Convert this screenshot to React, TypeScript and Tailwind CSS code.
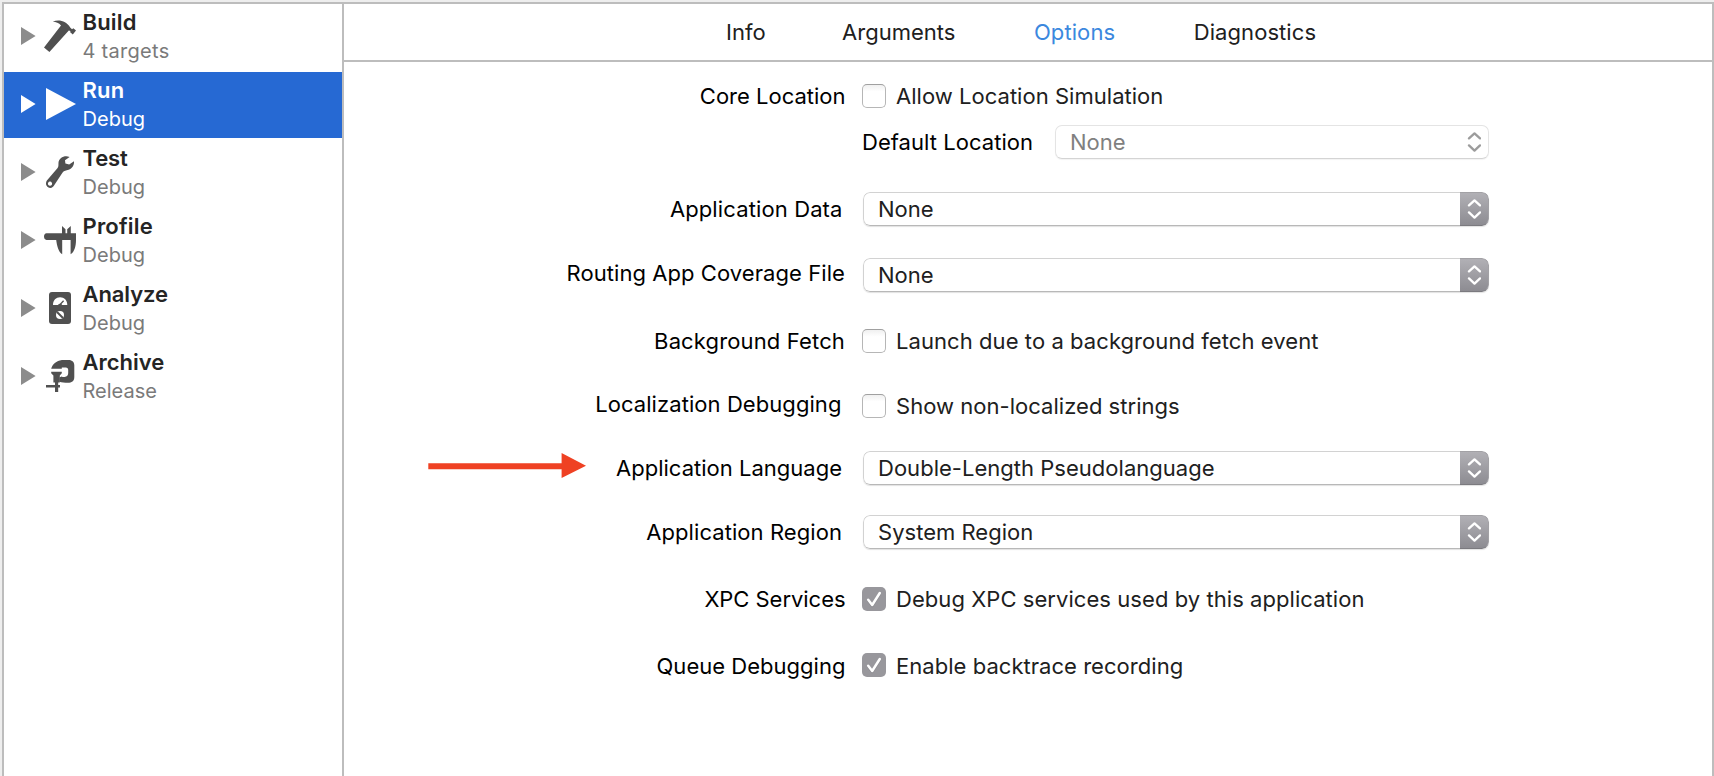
import React from "react";

type IconProps = { className?: string };

const ICON = "h-8 w-8 shrink-0 overflow-visible";

function HammerIcon() {
  return (
    <svg viewBox="0 0 32 32" className={ICON} fill="#505050">
      <path d="M8.8 1.6C15-.8 22.5 1 26.2 7.6L28 9.2L29.4 8.2L32 10.6L28.8 14.4L26.2 12.2L26.4 10.9L24.8 10.4L5.4 32L0 27.4L17 5.4C15 3 12 2.2 8.8 1.6Z" />
    </svg>
  );
}

function PlayIcon() {
  return (
    <svg viewBox="0 0 32 32" className={ICON} fill="#fff">
      <path d="M2 0L32 16L2 32Z" />
    </svg>
  );
}

function WrenchIcon() {
  return (
    <svg viewBox="0 0 32 32" className={ICON} fill="#505050">
      <path
        fillRule="evenodd"
        d="M25.6 1C20.5-1.2 15 2 14.5 6.6C14.3 9 14.8 10.4 13.6 12L2.9 24.4C.6 28 3 31.9 6.4 31.9C8.2 31.9 9.4 30.6 10.2 29.2L18.6 16.6C20.2 14.4 22 14.8 24.6 13.8C28.2 12.4 30.4 9 30 5.2L25.2 8.4L21.4 7.4L21 4.2ZM6 25.6a2.1 2.1 0 1 0 .01 0Z"
      />
    </svg>
  );
}

function CaliperIcon() {
  return (
    <svg viewBox="0 0 32 32" className={ICON} fill="#505050">
      <path d="M2.5 9.2H18V2L21.5 5.2V9.2H23.2V5.2L26.8 2V9.2H32V16C32 22 30.5 28 26.6 30.2V16H18.2V30.2C14.5 28 13 22 12.2 16H2.5C1 16 0 14.4 0 12.6C0 10.8 1 9.2 2.5 9.2Z" />
    </svg>
  );
}

function MeterIcon() {
  return (
    <svg viewBox="0 0 32 32" className={ICON}>
      <rect x="5" y="0" width="22" height="32" rx="3" fill="#505050" />
      <path d="M9 13C9 8.2 12 5.2 16.1 5.2C20.2 5.2 23.3 8.2 23.3 13H18.2A2.4 2.4 0 0 0 14 13Z" fill="#fff" />
      <path d="M15.6 13L19.6 8.8" stroke="#505050" strokeWidth="1.3" />
      <circle cx="16" cy="23" r="4" fill="#fff" />
      <path d="M13 20L19 26" stroke="#505050" strokeWidth="2" />
    </svg>
  );
}

function ClampIcon() {
  return (
    <svg viewBox="0 0 32 32" className={ICON} fill="#505050">
      <path d="M7.6 7.4C9.6 2.6 14.2 0 20 0H24.6C28.4 0 30.3 2.4 30.3 5.4V17C30.3 21.4 27.6 22.8 24 22.8C20.6 22.8 17.8 22.4 15.4 21.8V17.6L17.6 16.4C18.8 17.2 20.2 17.2 21.4 16.8C23.4 16.2 24.2 15 24.2 13V10C24.2 8.4 23.4 7.4 21.8 7.4H17.8V8.8H7.2Z" />
      <path d="M7.2 11.8H17.8V13.2L15.8 15.6V22.4H14.2V25H16V27.4H14.2V32H11V27.4H2V25H11V22.4H9.4V15.6L7.2 13.2Z" />
    </svg>
  );
}

function Disclosure({ className }: IconProps) {
  return (
    <svg viewBox="0 0 15 18" className={`mt-[23px] h-[18px] w-[15px] shrink-0 ${className}`} fill="currentColor">
      <path d="M0 0L14.6 9L0 18Z" />
    </svg>
  );
}

const ACTIONS = [
  { title: "Build", detail: "4 targets", Icon: HammerIcon, titleTracking: "tracking-[0.2px]", tracking: "tracking-[0.28px]" },
  { title: "Run", detail: "Debug", Icon: PlayIcon, titleTracking: "tracking-[0.2px]", tracking: "tracking-[0.02px]", selected: true },
  { title: "Test", detail: "Debug", Icon: WrenchIcon, titleTracking: "tracking-[-0.1px]", tracking: "tracking-[0.02px]" },
  { title: "Profile", detail: "Debug", Icon: CaliperIcon, titleTracking: "tracking-[0.2px]", tracking: "tracking-[0.02px]" },
  { title: "Analyze", detail: "Debug", Icon: MeterIcon, titleTracking: "tracking-[-0.1px]", tracking: "tracking-[0.02px]" },
  { title: "Archive", detail: "Release", Icon: ClampIcon, titleTracking: "tracking-[0px]", tracking: "tracking-[0px]" },
];

function Sidebar() {
  return (
    <nav className="w-[340px] shrink-0 border-r-2 border-[#bdbdbd]">
      {ACTIONS.map(({ title, detail, Icon, titleTracking, tracking, selected }) => (
        <div key={title} className={`mb-0.5 flex h-[66px] items-start pl-[17px] ${selected ? "bg-[#2669d3] text-white" : "text-[#252525]"}`}>
          <Disclosure className={selected ? "text-white" : "text-[#8c8c8c]"} />
          <div className="ml-2 mt-4">
            <Icon />
          </div>
          <div className="ml-[6.5px] pt-1">
            <div className={`text-[22px] leading-7 font-semibold ${titleTracking}`}>{title}</div>
            <div className={`pt-px text-[20px] leading-7 ${tracking} ${selected ? "text-white" : "text-[#7a7a7a]"}`}>{detail}</div>
          </div>
        </div>
      ))}
    </nav>
  );
}

function Chevrons({ className }: IconProps) {
  return (
    <svg viewBox="0 0 14 20" className={`h-5 w-3.5 ${className}`} fill="none" stroke="currentColor" strokeWidth="2.3" strokeLinecap="round" strokeLinejoin="round">
      <path d="M2 6.4L7.5 1.4L13 6.4M2 13.4L7.5 18.6L13 13.4" />
    </svg>
  );
}

function Select({ value, tracking = "" }: { value: string; tracking?: string }) {
  return (
    <div className="ml-px flex h-[34px] w-[626px] overflow-hidden rounded-[7px] shadow-[0_1px_1px_rgba(0,0,0,0.12)]">
      <div className={`flex-1 rounded-l-[7px] border border-r-0 border-[#d2d2d2] border-b-[#b8b8b8] pl-3.5 leading-8 ${tracking}`}>{value}</div>
      <div className="flex w-[29px] items-center justify-center rounded-r-[7px] border border-l-0 border-[#a2a1a5] border-b-[#7b7a7f] bg-linear-to-b from-[#b1b0b5] to-[#8d8c92]">
        <Chevrons className="text-white" />
      </div>
    </div>
  );
}

function Checkbox({ label, checked, className = "mt-[5px]", tracking = "" }: { label: string; checked?: boolean; className?: string; tracking?: string }) {
  return (
    <div className="flex items-start gap-2.5">
      {checked ? (
        <div className={`h-6 w-6 rounded-[5px] bg-[#98979c] ${className}`}>
          <svg viewBox="0 0 24 24" className="h-6 w-6" fill="none" strokeLinecap="round" strokeLinejoin="round">
            <path d="M6.2 13.8L10.2 19L17.8 7" stroke="#7c7b80" strokeOpacity="0.5" strokeWidth="2.4" />
            <path d="M6.2 12.8L10.2 18L17.8 6" stroke="#fff" strokeWidth="2.5" />
          </svg>
        </div>
      ) : (
        <div className={`h-6 w-6 rounded-[5px] border border-[#b6b6b6] border-t-[#a0a0a0] bg-linear-to-b from-[#f0f0f0] to-white to-30% ${className}`} />
      )}
      <span className={tracking}>{label}</span>
    </div>
  );
}

function Arrow() {
  return (
    <svg viewBox="0 0 158 26" className="mt-0.5 ml-[84px] h-[26px] w-[158px]" fill="#ef4123">
      <path d="M0.3 10.2H133.6V0L158 12.7L133.6 25V16.2H0.3Z" />
    </svg>
  );
}

function Row({ label, gap, labelClass, arrow, children }: { label?: string; gap: string; labelClass?: string; arrow?: boolean; children: React.ReactNode }) {
  return (
    <div className={`flex h-[34px] items-start whitespace-nowrap leading-[34px] ${gap}`}>
      <div className="flex w-[518px] shrink-0 items-start">
        {arrow && <Arrow />}
        <span className={`ml-auto text-black ${labelClass}`}>{label}</span>
      </div>
      {children}
    </div>
  );
}

function OptionsForm() {
  return (
    <div className="text-[22px] text-[#202020]">
      <Row label="Core Location" gap="mt-[17px]" labelClass="pr-[16.5px]">
        <Checkbox label="Allow Location Simulation" tracking="tracking-[0.03px]" />
      </Row>
      <Row gap="mt-3">
        <span className="w-[193px] tracking-[0.04px] text-black">Default Location</span>
        <div className="flex h-[34px] w-[434px] items-center rounded-[7px] border border-[#e4e4e4] border-b-[#d4d4d4] pr-[7px] pl-3.5 text-[#808080] shadow-[0_1px_1px_rgba(0,0,0,0.05)]">
          <span className="flex-1 leading-8">None</span>
          <Chevrons className="text-[#9c9c9c]" />
        </div>
      </Row>
      <Row label="Application Data" gap="mt-[33px]" labelClass="pr-[19.5px] tracking-[0.12px]">
        <Select value="None" />
      </Row>
      <Row label="Routing App Coverage File" gap="mt-8" labelClass="pr-[17px] leading-[30px] tracking-[0.07px]">
        <Select value="None" />
      </Row>
      <Row label="Background Fetch" gap="mt-8" labelClass="pr-[17px] tracking-[0.14px]">
        <Checkbox label="Launch due to a background fetch event" tracking="tracking-[0.07px]" />
      </Row>
      <Row label="Localization Debugging" gap="mt-[31px]" labelClass="pr-[20.5px] leading-[30px] tracking-[0.07px]">
        <Checkbox label="Show non-localized strings" tracking="tracking-[0.03px]" />
      </Row>
      <Row label="Application Language" gap="mt-7" labelClass="pr-5 tracking-[0.01px]" arrow>
        <Select value="Double-Length Pseudolanguage" tracking="tracking-[0.02px]" />
      </Row>
      <Row label="Application Region" gap="mt-[30px]" labelClass="pr-5 tracking-[0.07px]">
        <Select value="System Region" tracking="tracking-[0.02px]" />
      </Row>
      <Row label="XPC Services" gap="mt-[33px]" labelClass="pr-[16.5px] tracking-[-0.04px]">
        <Checkbox label="Debug XPC services used by this application" checked tracking="tracking-[0.06px]" />
      </Row>
      <Row label="Queue Debugging" gap="mt-[33px]" labelClass="pr-[16.5px] tracking-[0.02px]">
        <Checkbox label="Enable backtrace recording" checked className="mt-1" tracking="tracking-[0.04px]" />
      </Row>
    </div>
  );
}

export default function App() {
  return (
    <div className="h-[776px] w-[1714px] overflow-hidden bg-[#eeeeee] pt-0.5 pl-0.5 font-['Inter','Liberation_Sans',sans-serif]">
      <div className="flex h-[774px] border-2 border-b-0 border-[#bdbdbd] bg-white">
        <Sidebar />
        <main className="min-w-0 flex-1">
          <div className="flex h-[58px] items-start border-b-2 border-[#bdbdbd] pt-[11px] pl-[382px] text-[22px] leading-[34px] text-[#202020]">
            <span className="mr-[76.5px]">Info</span>
            <span className="mr-[78.5px]">Arguments</span>
            <span className="mr-[78.5px] tracking-[0.1px] text-[#3b88de]">Options</span>
            <span className="tracking-[0.07px]">Diagnostics</span>
          </div>
          <OptionsForm />
        </main>
      </div>
    </div>
  );
}
